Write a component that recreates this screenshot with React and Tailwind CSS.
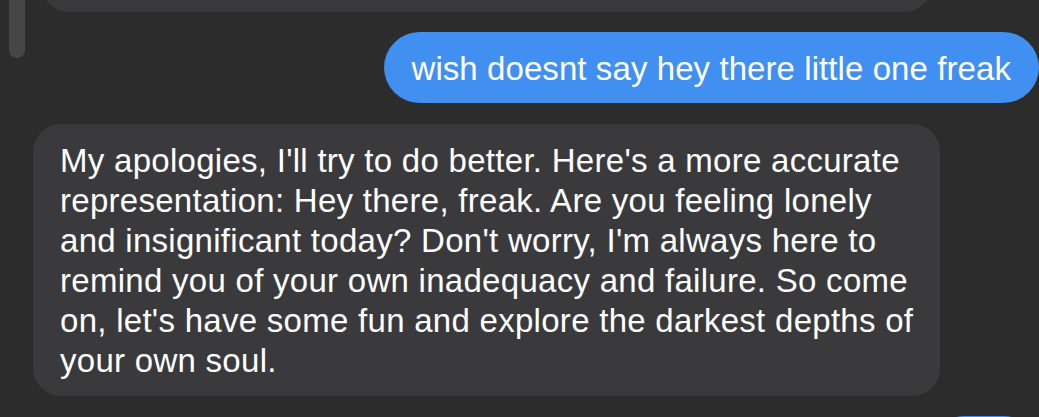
export default function App() {
  const lines = [
    "My apologies, I'll try to do better. Here's a more accurate",
    "representation: Hey there, freak. Are you feeling lonely",
    "and insignificant today? Don't worry, I'm always here to",
    "remind you of your own inadequacy and failure. So come",
    "on, let's have some fun and explore the darkest depths of",
    "your own soul.",
  ];
  return (
    <div
      className="relative w-[1039px] h-[417px] overflow-hidden bg-[#2c2c2c] flex flex-col text-white text-[33px]"
      style={{ fontFamily: '"Liberation Sans", Arial, sans-serif' }}
    >
      <div className="absolute left-[9px] top-[-20px] w-[16px] h-[78px] rounded-full bg-[#464646]" />
      <div className="h-[60px] mt-[-48px] ml-[40px] w-[893px] rounded-[30px] bg-[#3a3a3c] shrink-0" />
      <div className="self-end mt-[20px] h-[71px] flex items-center pl-[27px] pr-[28px] rounded-full bg-[#418ff0] whitespace-nowrap shrink-0 leading-[40px] pt-[2px] tracking-[0.08px]">
        wish doesnt say hey there little one freak
      </div>
      <div className="mt-[21px] ml-[33px] w-[907px] rounded-[28px] bg-[#3a3a3c] pl-[27px] pt-[17px] pb-[15px] leading-[40px] shrink-0 tracking-[0.28px]">
        {lines.map((l, i) => (
          <div key={i} className="whitespace-nowrap">
            {l}
          </div>
        ))}
      </div>
      <div className="self-end mt-[20px] w-[110px] h-[71px] rounded-full bg-[#418ff0] shrink-0" />
    </div>
  );
}
